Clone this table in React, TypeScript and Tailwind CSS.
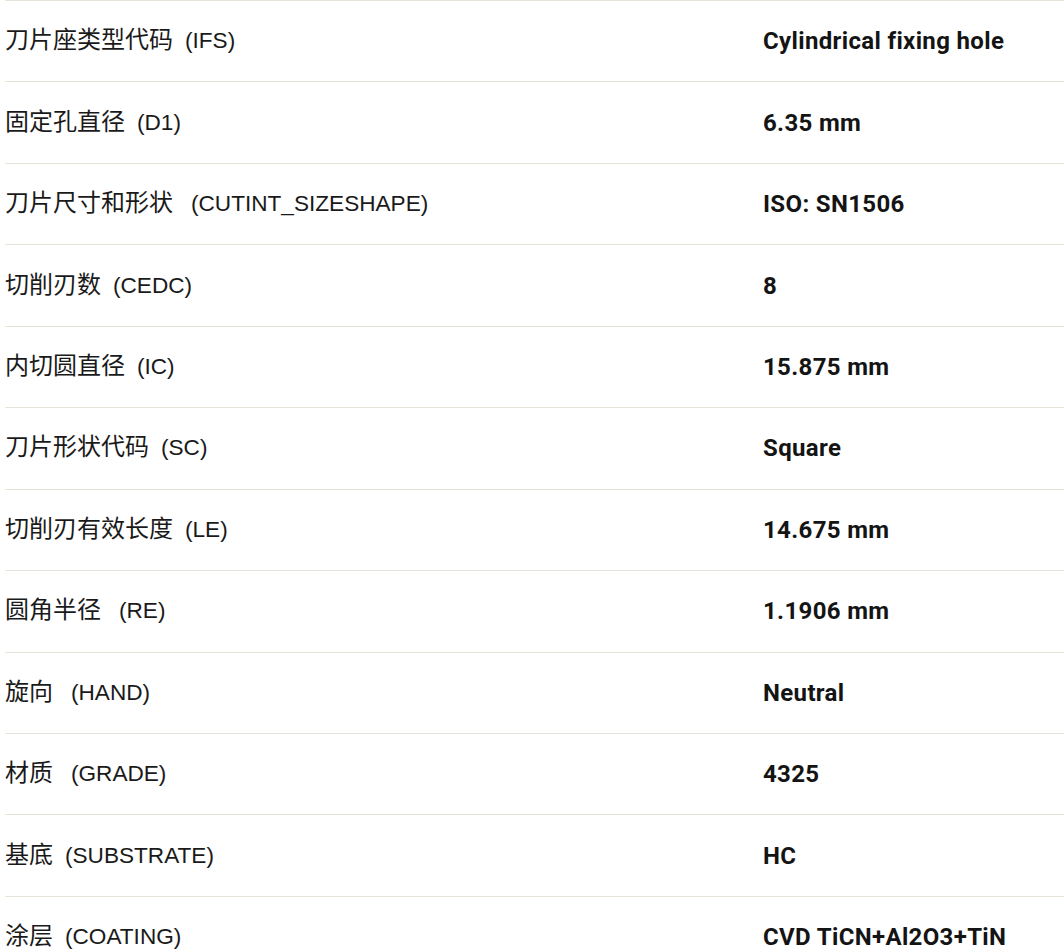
const rows = [
  { label: "刀片座类型代码", code: "(IFS)", value: "Cylindrical fixing hole" },
  { label: "固定孔直径", code: "(D1)", value: "6.35 mm" },
  { label: "刀片尺寸和形状", code: "(CUTINT_SIZESHAPE)", value: "ISO: SN1506", wide: true },
  { label: "切削刃数", code: "(CEDC)", value: "8" },
  { label: "内切圆直径", code: "(IC)", value: "15.875 mm" },
  { label: "刀片形状代码", code: "(SC)", value: "Square" },
  { label: "切削刃有效长度", code: "(LE)", value: "14.675 mm" },
  { label: "圆角半径", code: "(RE)", value: "1.1906 mm", wide: true },
  { label: "旋向", code: "(HAND)", value: "Neutral", wide: true },
  { label: "材质", code: "(GRADE)", value: "4325", wide: true },
  { label: "基底", code: "(SUBSTRATE)", value: "HC" },
  { label: "涂层", code: "(COATING)", value: "CVD TiCN+Al2O3+TiN" },
];

export default function App() {
  return (
    <div className="min-h-screen bg-white pl-[5px]">
      <div className="flex flex-col">
        {rows.map((row, i) => (
          <div
            key={i}
            className="grid grid-cols-[758px_1fr] items-center h-[81.45px] border-t border-[#e8e3da] shrink-0"
          >
            <div className="flex items-baseline text-[#1a1a1a] pb-[3px]">
              <span
                className="text-[24px] leading-8"
                style={{ fontFamily: '"Noto Sans CJK SC", sans-serif' }}
              >
                {row.label}
              </span>
              <span
                className={`text-[22.6px] leading-8 ${row.wide ? "ml-[18px]" : "ml-[12px]"}`}
                style={{ fontFamily: '"Liberation Sans", sans-serif' }}
              >
                {row.code}
              </span>
            </div>
            <div
              className="text-[24px] font-bold text-[#141414] tracking-[0.35px]"
              style={{ fontFamily: 'Roboto, sans-serif' }}
            >
              {row.value}
            </div>
          </div>
        ))}
      </div>
    </div>
  );
}
